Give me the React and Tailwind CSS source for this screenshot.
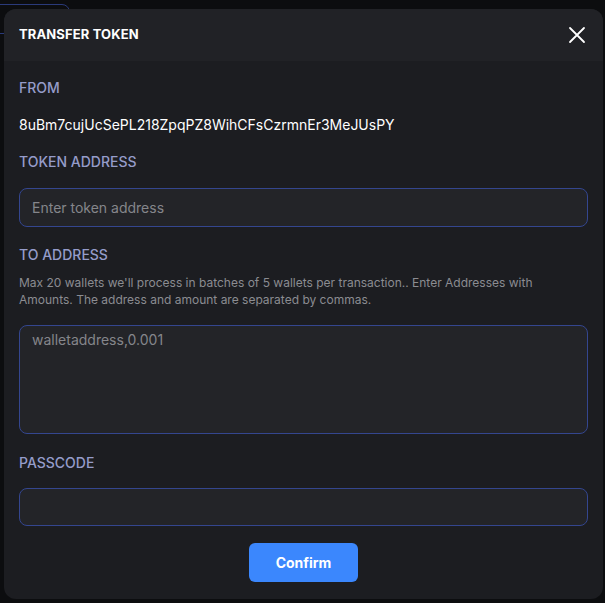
import React, { useState } from 'react';

export default function App() {
  const [tokenAddress, setTokenAddress] = useState('');
  const [toAddress, setToAddress] = useState('');
  const [passcode, setPasscode] = useState('');

  return (
    <div
      className="relative h-[603px] w-[605px] overflow-hidden bg-[#0c0d0f]"
      style={{ fontFamily: 'Inter, "Liberation Sans", sans-serif' }}
    >
      {/* faint page behind the overlay */}
      <div className="absolute left-[-20px] top-[4px] h-[30px] w-[90px] rounded-lg border border-[#2a3a7a]" />

      {/* Modal */}
      <div className="absolute left-[4px] top-[9px] flex h-[590px] w-[599px] flex-col overflow-hidden rounded-xl bg-[#1c1d21]">
        {/* Header */}
        <div className="flex h-[52px] items-center justify-between bg-[#212226] pl-[15px] pr-[17px]">
          <h2 className="text-[13px] font-bold tracking-[0.01em] text-white">TRANSFER TOKEN</h2>
          <button className="text-white">
            <svg width="18" height="18" viewBox="0 0 18 18" fill="none" stroke="currentColor" strokeWidth="1.8" strokeLinecap="round">
              <path d="M2 2L16 16M16 2L2 16" />
            </svg>
          </button>
        </div>

        {/* Body */}
        <div className="flex flex-col px-[15px]">
          <p className="mt-[16px] text-[14px] font-medium text-[#959cca]">FROM</p>
          <p className="mt-[16px] text-[14px] text-white">8uBm7cujUcSePL218ZpqPZ8WihCFsCzrmnEr3MeJUsPY</p>

          <p className="mt-[16px] text-[14px] font-medium text-[#959cca]">TOKEN ADDRESS</p>
          <input
            value={tokenAddress}
            onChange={(e) => setTokenAddress(e.target.value)}
            placeholder="Enter token address"
            className="mt-[16px] h-[39px] w-full rounded-lg border border-[#34468f] bg-[#232428] px-3 text-[14px] text-white placeholder-[#85868b] outline-none"
          />

          <p className="mt-[17px] text-[14px] font-medium text-[#959cca]">TO ADDRESS</p>
          <p className="mt-[9px] text-[12px] leading-[17px] text-[#8b8c91]">
            Max 20 wallets we'll process in batches of 5 wallets per transaction.. Enter Addresses with Amounts. The address and amount are separated by commas.
          </p>
          <textarea
            value={toAddress}
            onChange={(e) => setToAddress(e.target.value)}
            placeholder="walletaddress,0.001"
            className="mt-[17px] h-[109px] w-full resize-none rounded-lg border border-[#34468f] bg-[#232428] px-3 py-[3px] text-[14px] text-white placeholder-[#85868b] outline-none"
          />

          <p className="mt-[18px] text-[14px] font-medium text-[#959cca]">PASSCODE</p>
          <input
            type="password"
            value={passcode}
            onChange={(e) => setPasscode(e.target.value)}
            className="mt-[15px] h-[38px] w-full rounded-lg border border-[#34468f] bg-[#232428] px-3 text-[14px] text-white outline-none"
          />

          <div className="mt-[17px] flex justify-center">
            <button className="h-[39px] w-[109px] rounded-md bg-[#3b87fd] text-[14px] font-bold text-white">
              Confirm
            </button>
          </div>
        </div>
      </div>
    </div>
  );
}
